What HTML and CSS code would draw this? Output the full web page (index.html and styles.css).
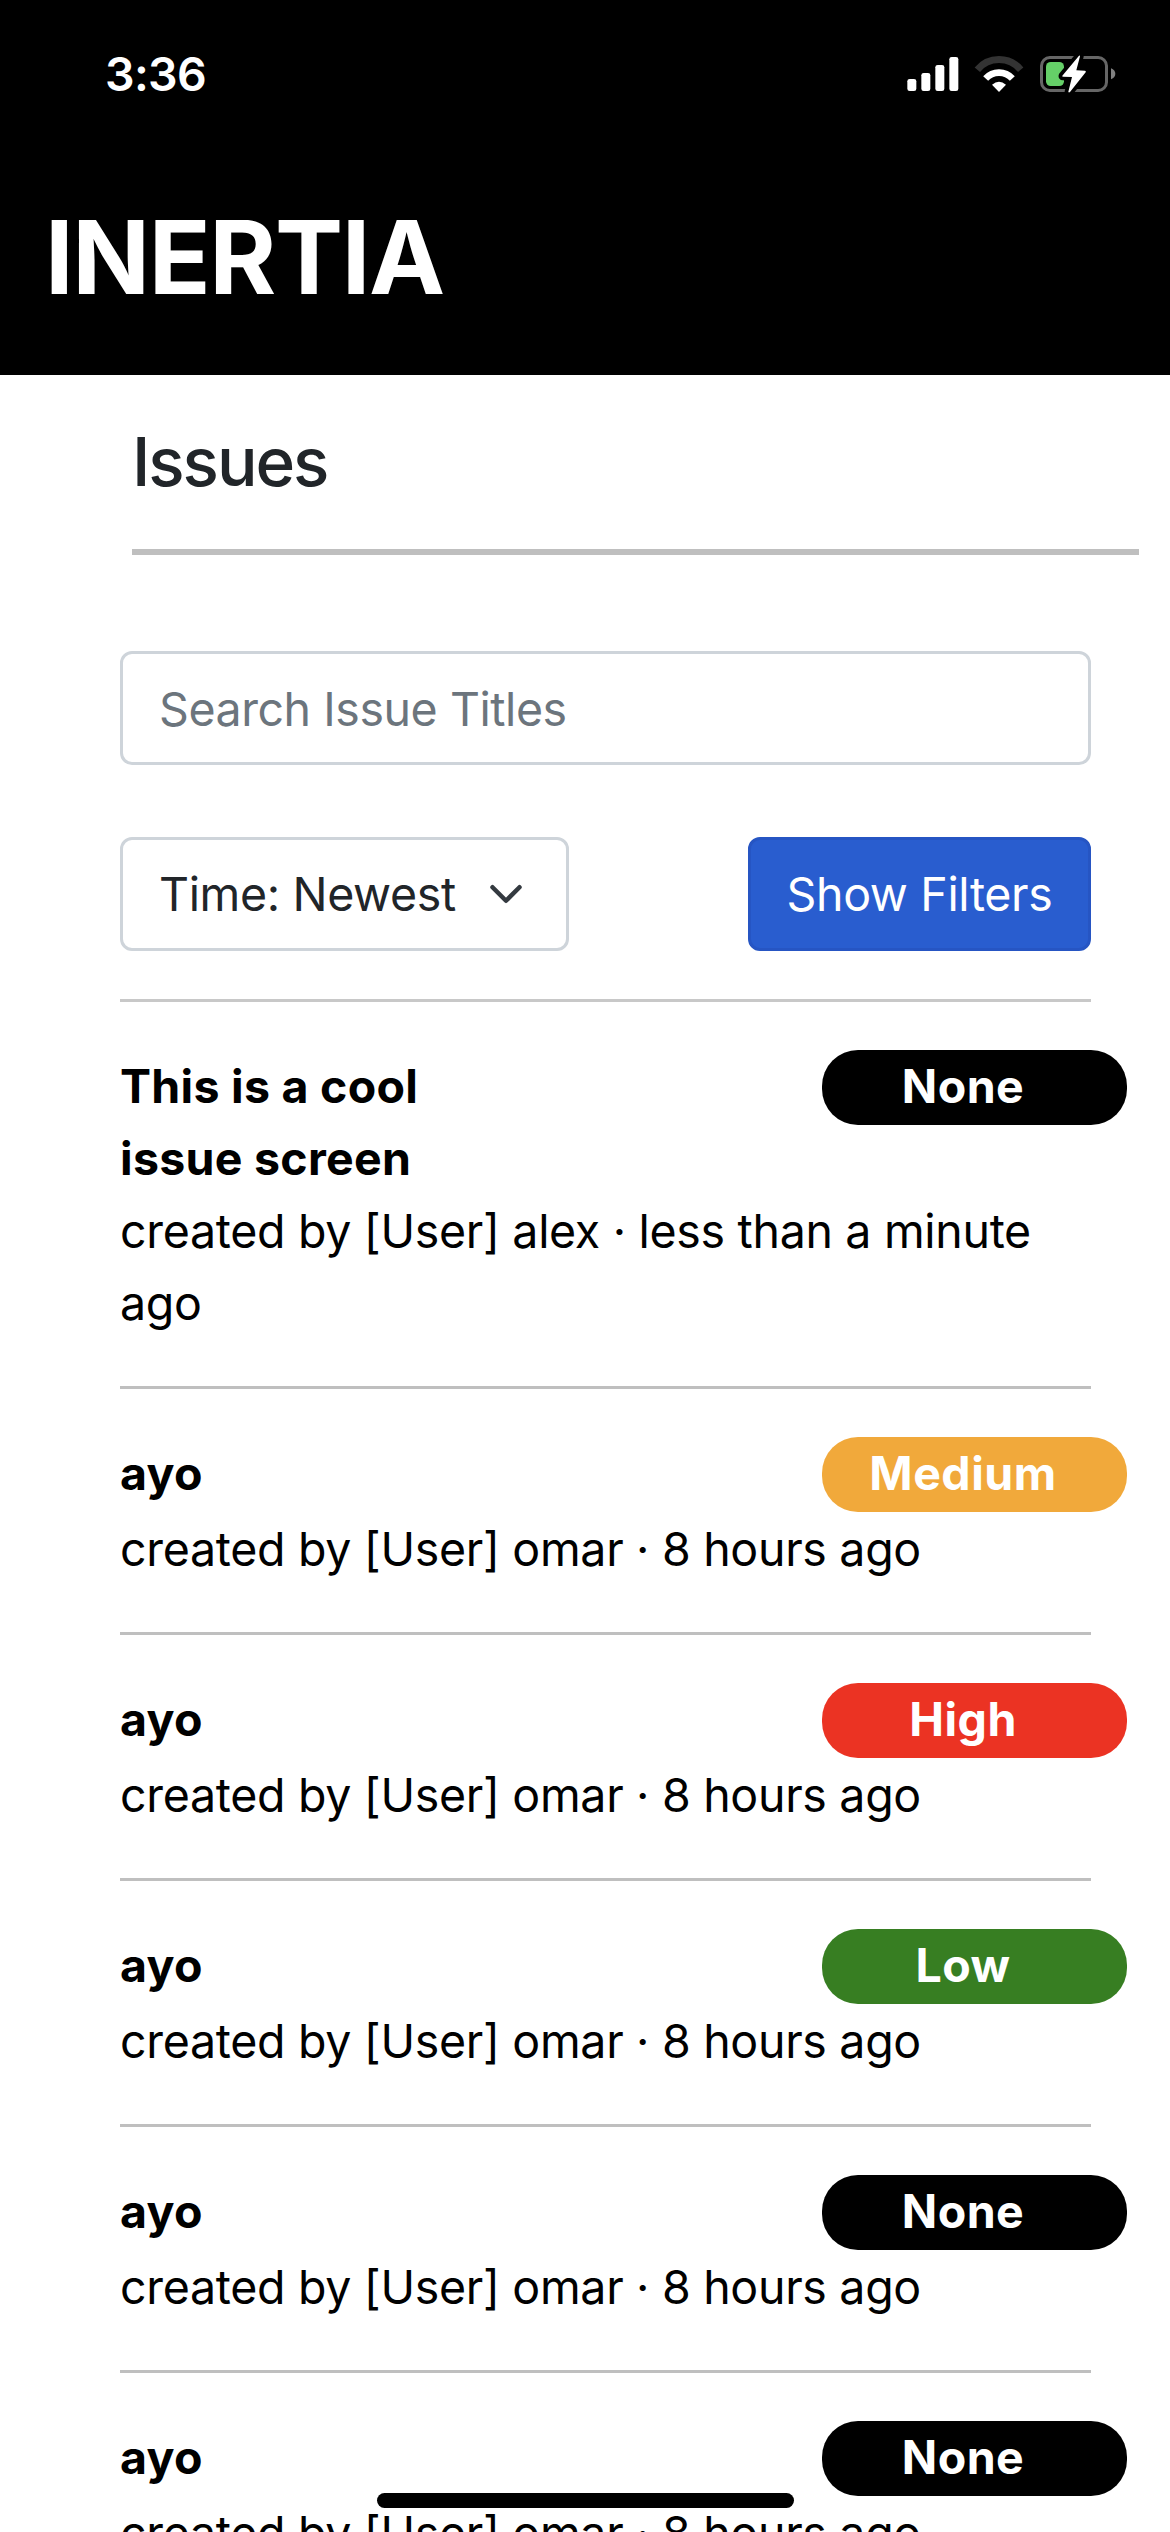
FILE: index.html
```
<!DOCTYPE html>
<html lang="en">
<head>
<meta charset="utf-8">
<title>Inertia – Issues</title>
<link rel="stylesheet" href="styles.css">
</head>
<body>
<div class="screen">
  <header class="header">
    <div class="status">
      <span class="clock">3:36</span>
      <div class="status-icons">
        <svg width="52" height="36" viewBox="80 48 156 108" fill="#fff">
          <rect x="81" y="117" width="27" height="36" rx="7"/>
          <rect x="123" y="99" width="27" height="54" rx="7"/>
          <rect x="165" y="75" width="27" height="78" rx="7"/>
          <rect x="207" y="51" width="27" height="102" rx="7"/>
        </svg>
        <svg width="50" height="38" viewBox="282 42 150 114" fill="none">
          <path d="M292 86A84.500 84.500 0 0 1 422 86" stroke="#333" stroke-width="21"/>
          <path d="M317 112.500A54 54 0 0 1 397 112.500" stroke="#fff" stroke-width="20"/>
          <path d="M336 131Q357 113 378 131L357 153Z" fill="#fff"/>
        </svg>
        <svg width="77" height="42" viewBox="477 39 231 126">
          <rect x="484.500" y="52.500" width="195" height="99" rx="25" fill="none" stroke="#666" stroke-width="9"/>
          <path d="M693 85Q706 90 706 101.500T693 118Z" fill="#808080"/>
          <rect x="498" y="66" width="54" height="72" rx="14" fill="#65cf68"/>
          <path d="M597 47L547 107Q546 110 549 110L576 111L565 155Q566 159 570 156L617 97Q619 93 615 92L589 91L600 49Q600 45 597 47Z" fill="#fff" stroke="#000" stroke-width="22" paint-order="stroke" stroke-linejoin="round"/>
        </svg>
      </div>
    </div>
    <div class="brand">INERTIA</div>
  </header>

  <main class="content">
    <h1 class="page-title">Issues</h1>

    <div class="panel">
      <input class="search" type="text" placeholder="Search Issue Titles">
      <div class="controls">
        <div class="select">
          <span>Time: Newest</span>
          <svg width="36" height="36" viewBox="0 0 16 16" fill="none" stroke="#343a40" stroke-width="2" stroke-linecap="round" stroke-linejoin="round"><path d="M2 5l6 6 6-6"/></svg>
        </div>
        <button class="filters">Show Filters</button>
      </div>

      <div class="issues">
        <article class="issue">
          <div class="row"><h2 class="title">This is a cool issue screen</h2><span class="badge none">None</span></div>
          <p class="meta">created by [User] alex · less than a minute ago</p>
        </article>
        <article class="issue">
          <div class="row"><h2 class="title">ayo</h2><span class="badge medium">Medium</span></div>
          <p class="meta">created by [User] omar · 8 hours ago</p>
        </article>
        <article class="issue">
          <div class="row"><h2 class="title">ayo</h2><span class="badge high">High</span></div>
          <p class="meta">created by [User] omar · 8 hours ago</p>
        </article>
        <article class="issue">
          <div class="row"><h2 class="title">ayo</h2><span class="badge low">Low</span></div>
          <p class="meta">created by [User] omar · 8 hours ago</p>
        </article>
        <article class="issue">
          <div class="row"><h2 class="title">ayo</h2><span class="badge none">None</span></div>
          <p class="meta">created by [User] omar · 8 hours ago</p>
        </article>
        <article class="issue">
          <div class="row"><h2 class="title">ayo</h2><span class="badge none">None</span></div>
          <p class="meta">created by [User] omar · 8 hours ago</p>
        </article>
      </div>
    </div>
  </main>
  <div class="home-indicator"></div>
</div>
</body>
</html>
```
FILE: styles.css
```
* { box-sizing: border-box; margin: 0; }

body {
  background: #fff;
  color: #212529;
  font: 400 46.5px/72px Inter, "Liberation Sans", sans-serif;
  letter-spacing: -0.35px;
}

.screen {
  position: relative;
  width: 1170px;
  height: 2532px;
  overflow: hidden;
}

.header {
  height: 375px;
  background: #000;
  color: #fff;
}

.status {
  display: flex;
  justify-content: space-between;
  height: 150px;
  padding: 38px 54px 0 105px;
}

.clock { font-weight: 600; letter-spacing: -0.67px; }

.status-icons {
  display: flex;
  align-items: center;
  gap: 15px;
  height: 72px;
}

.brand {
  padding: 57px 0 0 45px;
  font-size: 102px;
  font-weight: 700;
  line-height: 100px;
  letter-spacing: -1.34px;
}

.page-title {
  height: 180px;
  margin: 0 31px 0 132px;
  padding-top: 46px;
  border-bottom: 6px solid #bfbfbf;
  font-size: 67.5px;
  font-weight: 500;
  line-height: 81px;
  letter-spacing: -2.07px;
}

.panel { padding: 96px 79px 0 120px; }

.search,
.select,
.filters {
  height: 114px;
  border: 3px solid #ced4da;
  border-radius: 12px;
  background: #fff;
  color: inherit;
  font: inherit;
  letter-spacing: inherit;
}

.search {
  display: block;
  width: 100%;
  padding: 2px 36px 0;
  letter-spacing: -0.44px;
}

.search::placeholder { color: #6c757d; opacity: 1; }

.controls {
  display: flex;
  justify-content: space-between;
  margin-top: 72px;
}

.select {
  display: flex;
  align-items: center;
  justify-content: space-between;
  width: 449px;
  padding: 0 42px 0 36px;
}

.filters {
  width: 343px;
  padding: 0;
  border-color: #2655c3;
  background: #295dcf;
  color: #fff;
}

.issues {
  margin-top: 48px;
  border-top: 3px solid #c8c8c8;
  color: #000;
}

.issue {
  padding: 48px 0 47px;
  border-bottom: 3px solid #bfbfbf;
}

.row {
  display: flex;
  align-items: flex-start;
  justify-content: space-between;
  min-height: 75px;
  margin: 0 -36px 1px 0;
}

.title {
  width: 340px;
  font-size: inherit;
  font-weight: 700;
  letter-spacing: 0.28px;
}

.meta { letter-spacing: -0.31px; }

.badge {
  width: 305px;
  height: 75px;
  padding-right: 23px;
  border-radius: 36px;
  color: #fff;
  font-weight: 700;
  line-height: 73px;
  letter-spacing: 0.5px;
  text-align: center;
}

.none { background: #000; }
.medium { background: #f1a93b; }
.high { background: #eb3323; }
.low { background: #377e22; }

.home-indicator {
  position: absolute;
  left: 377px;
  bottom: 24px;
  width: 417px;
  height: 15px;
  border-radius: 8px;
  background: #000;
}
```
